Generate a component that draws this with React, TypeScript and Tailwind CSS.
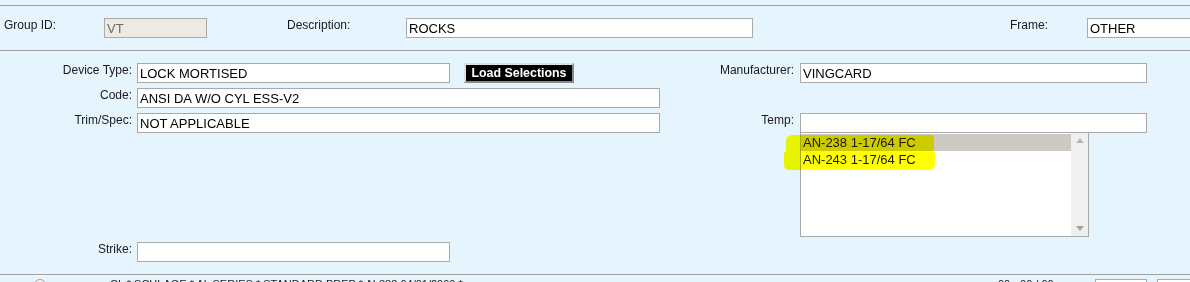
import React from "react";

const Label = ({ children, className = "" }: { children: React.ReactNode; className?: string }) => (
  <span className={`shrink-0 whitespace-nowrap text-[12px] leading-[14px] text-[#1a1a1a] ${className}`}>{children}</span>
);

const Field = ({ value, className = "" }: { value: string; className?: string }) => (
  <div
    className={`shrink-0 h-[20px] border border-[#a9a9a9] bg-white text-[13px] leading-[19px] pl-[2px] text-black whitespace-nowrap overflow-hidden ${className}`}
  >
    {value}
  </div>
);

export default function App() {
  return (
    <div className="w-[1190px] h-[282px] overflow-hidden bg-[#e6f4fd] font-['Liberation_Sans',Arial,sans-serif]">
      <div className="h-[5px]" />
      {/* Header */}
      <div className="h-[46px] border-y border-[#a0a0a0] pt-[12px] flex items-start">
        <Label className="ml-[4px] w-[100px]">Group ID:</Label>
        <div className="shrink-0 h-[20px] w-[103px] border border-[#a9a9a9] bg-[#ebeae3] text-[13px] leading-[19px] pl-[2px] text-[#6d6a64]">
          VT
        </div>
        <Label className="ml-[80px] w-[119px]">Description:</Label>
        <Field value="ROCKS" className="w-[347px]" />
        <Label className="ml-[257px] w-[77px]">Frame:</Label>
        <Field value="OTHER" className="w-[120px]" />
      </div>

      {/* Body */}
      <div className="h-[224px] border-b border-[#a0a0a0] pt-[12px] flex items-start">
        {/* left column */}
        <div className="w-[690px] shrink-0 flex flex-col">
          <div className="flex flex-col gap-[5px]">
            <div className="flex items-start">
              <Label className="w-[133px] text-right pr-[1px]">Device Type:</Label>
              <Field value="LOCK MORTISED" className="ml-[4px] w-[313px]" />
              <button className="shrink-0 ml-[14px] w-[110px] h-[20px] bg-black text-white font-bold text-[12.4px] leading-[16px] border-2 border-t-[#e0e0e0] border-l-[#e0e0e0] border-b-[#8a8a8a] border-r-[#8a8a8a]">
                Load Selections
              </button>
            </div>
            <div className="flex items-start">
              <Label className="w-[133px] text-right pr-[1px]">Code:</Label>
              <Field value="ANSI DA W/O CYL ESS-V2" className="ml-[4px] w-[523px]" />
            </div>
            <div className="flex items-start">
              <Label className="w-[133px] text-right pr-[1px]">Trim/Spec:</Label>
              <Field value="NOT APPLICABLE" className="ml-[4px] w-[523px]" />
            </div>
          </div>
          <div className="flex items-start mt-[109px]">
            <Label className="w-[133px] text-right pr-[1px]">Strike:</Label>
            <Field value="" className="ml-[4px] w-[313px]" />
          </div>
        </div>

        {/* right column */}
        <div className="flex flex-col shrink-0">
          <div className="flex items-start">
            <Label className="w-[105px] text-right pr-[1px]">Manufacturer:</Label>
            <Field value="VINGCARD" className="ml-[5px] w-[347px]" />
          </div>
          <div className="flex items-start mt-[30px]">
            <Label className="w-[105px] text-right pr-[1px]">Temp:</Label>
            <Field value="" className="ml-[5px] w-[347px]" />
          </div>
          <div className="relative ml-[110px] w-[289px] h-[104px] border border-t-0 border-[#a9a9a9] bg-white flex">
            <div className="flex-1 flex flex-col text-[13px] leading-[17px] text-[#1a1a1a]">
              <div className="h-[17px] bg-[#cdcac3] pl-[2px] mt-[1px]">AN-238 1-17/64 FC</div>
              <div className="h-[17px] pl-[2px]">AN-243 1-17/64 FC</div>
            </div>
            <div className="w-[17px] bg-[#f0f0f0] flex flex-col justify-between items-center py-[5px]">
              <svg width="8" height="5" viewBox="0 0 8 5">
                <path d="M0 5 L4 0 L8 5 Z" fill="#b5b5b5" />
              </svg>
              <svg width="8" height="5" viewBox="0 0 8 5">
                <path d="M0 0 L4 5 L8 0 Z" fill="#a3a3a3" />
              </svg>
            </div>
            {/* highlighter strokes */}
            <div className="absolute left-[-15px] top-[2px] w-[148px] h-[17px] bg-[#ffff00] mix-blend-multiply rounded-tl-[6px] rounded-tr-[2px] rounded-br-[4px]" />
            <div className="absolute left-[-17px] top-[19px] w-[151px] h-[18px] bg-[#ffff00] mix-blend-multiply rounded-bl-[5px] rounded-br-[6px]" />
          </div>
        </div>
      </div>

      {/* partial next row */}
      <div className="flex items-start pt-[3px] text-[11px] leading-[13px] text-[#1a1a1a]">
        <div className="w-[998px] shrink-0 flex items-start">
          <div className="shrink-0 ml-[34px] mt-[1px] w-[12px] h-[12px] rounded-full border border-[#a0a0a0] bg-[#f4f4f4]" />
          <span className="ml-[64px] whitespace-nowrap">CL * SCHLAGE * AL SERIES * STANDARD PREP * AL888 04/01/2000 *</span>
        </div>
        <span className="w-[97px] shrink-0 whitespace-nowrap">00 - 00 / 00</span>
        <div className="shrink-0 mt-[1px] w-[52px] h-[20px] border border-[#a9a9a9] bg-white text-[13px] text-right pr-[6px]">000</div>
        <div className="shrink-0 ml-[10px] mt-[1px] w-[40px] h-[20px] border border-[#a9a9a9] bg-white" />
      </div>
    </div>
  );
}
